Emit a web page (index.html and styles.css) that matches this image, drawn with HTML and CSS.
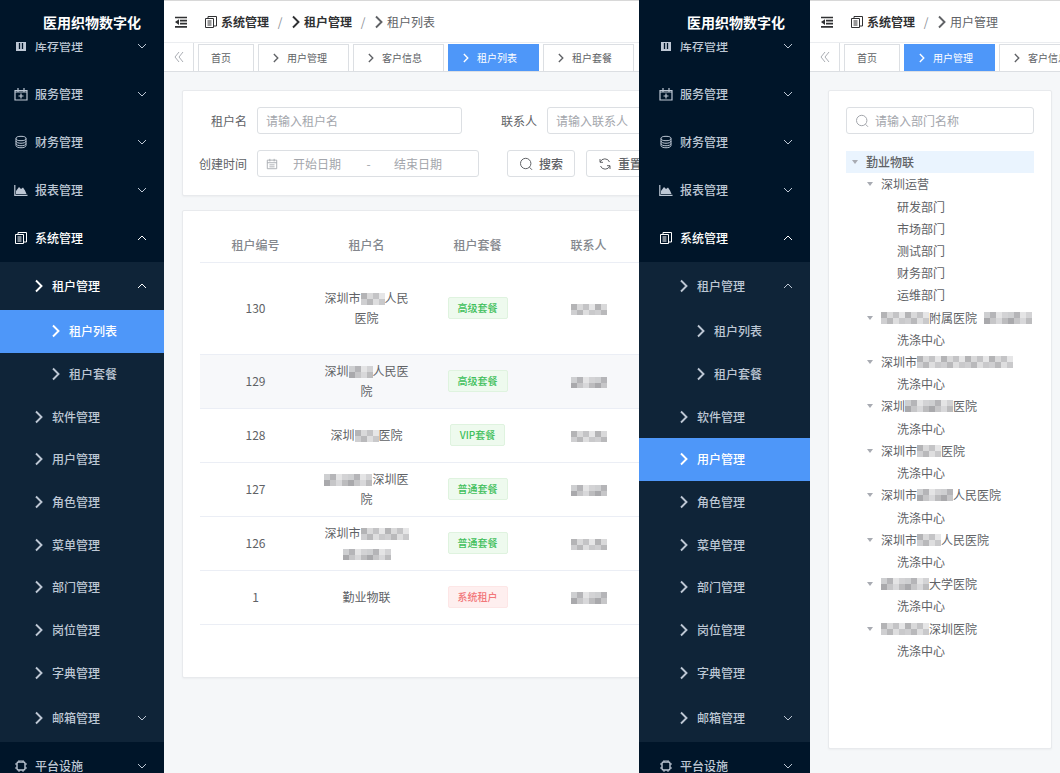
FILE: index.html
```html
<!DOCTYPE html>
<html lang="zh-CN">
<head>
<meta charset="utf-8">
<meta name="viewport" content="width=device-width, initial-scale=1">
<title>医用织物数字化</title>
<link rel="stylesheet" href="styles.css">
</head>
<body>
<svg class="sprite" aria-hidden="true">
  <symbol id="i-right" viewBox="0 0 10 14"><path d="M2 1.5 7.5 7 2 12.5" fill="none" stroke="currentColor" stroke-width="1.9"/></symbol>
  <symbol id="i-down" viewBox="0 0 10 10"><path d="M1 3 5 7 9 3" fill="none" stroke="currentColor" stroke-width="1"/></symbol>
  <symbol id="i-up" viewBox="0 0 10 10"><path d="M1 7 5 3 9 7" fill="none" stroke="currentColor" stroke-width="1"/></symbol>
  <symbol id="i-stock" viewBox="0 0 14 14"><path d="M2 2.5h10v9.500H2z" fill="currentColor"/><path d="M5.500 4v6M8.500 4v6" stroke="#001529" stroke-width="1.300"/></symbol>
  <symbol id="i-service" viewBox="0 0 14 14"><path d="M1 3.500h12v9.500H1zM1.500 5h11M4 1v4M10 1v4M7 6.500v5M4.500 9h5" fill="none" stroke="currentColor" stroke-width="1.200"/></symbol>
  <symbol id="i-finance" viewBox="0 0 14 14"><g fill="none" stroke="currentColor"><ellipse cx="7" cy="3.500" rx="5" ry="2.200"/><path d="M2 3.500v7c0 3 10 3 10 0v-7M2 6c0 3 10 3 10 0M2 8.500c0 3 10 3 10 0"/></g></symbol>
  <symbol id="i-chart" viewBox="0 0 14 14"><path d="M.8 2v10.300H13.500" fill="none" stroke="currentColor" stroke-width="1.200"/><path d="M2 11V8l3-4 2 2 2-1.500 2 3 1.500 3.500z" fill="currentColor"/></symbol>
  <symbol id="i-system" viewBox="0 0 14 14"><path d="M1.500 3.500h8v9h-8zM4 3.500v-2h8.500v9.500H9.500M3.500 6h4M3.500 8h4M3.500 10h4" fill="none" stroke="currentColor"/></symbol>
  <symbol id="i-chip" viewBox="0 0 14 14"><rect x="3" y="3" width="8" height="8" rx="1.500" fill="none" stroke="currentColor" stroke-width="1.400"/><path d="M5 1v2M7 1v1M9 1v2M5 11v2M9 11v2M1 5h2M1 9h2M11 5h2M11 9h2" stroke="currentColor"/></symbol>
  <symbol id="i-fold" viewBox="0 0 14 14"><path d="M1 2.500h12M6 5.700h7M6 8.600h7M1 11.800h12" fill="none" stroke="currentColor" stroke-width="1.700"/><path d="M5 4.300v5.600L1 7.100z" fill="currentColor"/></symbol>
  <symbol id="i-double" viewBox="0 0 12 12"><path d="M6 1 2 6l4 5M10 1 6 6l4 5" fill="none" stroke="currentColor" stroke-width=".9"/></symbol>
  <symbol id="i-calendar" viewBox="0 0 14 14"><path d="M1.500 2.500h11v10h-11zM1.500 5.500h11M4.500 1v3M9.500 1v3M4 8h6M4 10.300h6" fill="none" stroke="currentColor"/></symbol>
  <symbol id="i-search" viewBox="0 0 14 14"><circle cx="6.700" cy="6.500" r="5.200" fill="none" stroke="currentColor"/><path d="m10.500 10.300 2.500 2.500" stroke="currentColor"/></symbol>
  <symbol id="i-reset" viewBox="0 0 14 14"><path d="M2.200 5A5 5 0 0 1 11.500 5M11.800 9A5 5 0 0 1 2.500 9M2 2v3.300h3M12 12V8.700H9" fill="none" stroke="currentColor"/></symbol>
  <symbol id="i-caret" viewBox="0 0 8 8"><path d="M1 2h6L4 6z" fill="currentColor"/></symbol>
</svg>

<div class="desk">
  <section class="app" aria-label="租户列表">
    <nav class="side">
      <h1 class="brand">医用织物数字化</h1>
      <div class="scroll">
        <ul class="menu">
          <li><a class="item" href="#"><svg class="ico"><use href="#i-stock"/></svg>库存管理<svg class="fold"><use href="#i-down"/></svg></a></li>
          <li><a class="item" href="#"><svg class="ico"><use href="#i-service"/></svg>服务管理<svg class="fold"><use href="#i-down"/></svg></a></li>
          <li><a class="item" href="#"><svg class="ico"><use href="#i-finance"/></svg>财务管理<svg class="fold"><use href="#i-down"/></svg></a></li>
          <li><a class="item" href="#"><svg class="ico"><use href="#i-chart"/></svg>报表管理<svg class="fold"><use href="#i-down"/></svg></a></li>
          <li><a class="item open" href="#"><svg class="ico"><use href="#i-system"/></svg>系统管理<svg class="fold"><use href="#i-up"/></svg></a>
            <ul class="submenu">
              <li class="group"><a class="item sub open" href="#"><svg class="arr"><use href="#i-right"/></svg>租户管理<svg class="fold"><use href="#i-up"/></svg></a></li>
              <li><a class="item leaf active" href="#"><svg class="arr"><use href="#i-right"/></svg>租户列表</a></li>
              <li><a class="item leaf" href="#"><svg class="arr"><use href="#i-right"/></svg>租户套餐</a></li>
              <li><a class="item sub" href="#"><svg class="arr"><use href="#i-right"/></svg>软件管理</a></li>
              <li><a class="item sub" href="#"><svg class="arr"><use href="#i-right"/></svg>用户管理</a></li>
              <li><a class="item sub" href="#"><svg class="arr"><use href="#i-right"/></svg>角色管理</a></li>
              <li><a class="item sub" href="#"><svg class="arr"><use href="#i-right"/></svg>菜单管理</a></li>
              <li><a class="item sub" href="#"><svg class="arr"><use href="#i-right"/></svg>部门管理</a></li>
              <li><a class="item sub" href="#"><svg class="arr"><use href="#i-right"/></svg>岗位管理</a></li>
              <li><a class="item sub" href="#"><svg class="arr"><use href="#i-right"/></svg>字典管理</a></li>
              <li class="group"><a class="item sub" href="#"><svg class="arr"><use href="#i-right"/></svg>邮箱管理<svg class="fold"><use href="#i-down"/></svg></a></li>
            </ul>
          </li>
          <li><a class="item" href="#"><svg class="ico"><use href="#i-chip"/></svg>平台设施<svg class="fold"><use href="#i-down"/></svg></a></li>
        </ul>
      </div>
    </nav>
    <main class="main">
      <header class="top">
        <button class="toggle" aria-label="折叠菜单"><svg class="ico"><use href="#i-fold"/></svg></button>
        <nav class="crumbs" aria-label="面包屑">
          <a href="#"><svg class="ico"><use href="#i-system"/></svg>系统管理</a><span class="sep">/</span>
          <a href="#"><svg class="arr"><use href="#i-right"/></svg>租户管理</a><span class="sep">/</span>
          <span class="here"><svg class="arr"><use href="#i-right"/></svg>租户列表</span>
        </nav>
      </header>
      <nav class="tabs" aria-label="标签页">
        <button class="prev" aria-label="向左"><svg><use href="#i-double"/></svg></button>
        <a class="tab home" href="#">首页</a>
        <a class="tab" href="#"><svg class="arr"><use href="#i-right"/></svg>用户管理</a>
        <a class="tab" href="#"><svg class="arr"><use href="#i-right"/></svg>客户信息</a>
        <a class="tab active" href="#"><svg class="arr"><use href="#i-right"/></svg>租户列表</a>
        <a class="tab" href="#"><svg class="arr"><use href="#i-right"/></svg>租户套餐</a>
      </nav>
      <div class="content">
        <form class="card filter">
          <div class="line">
            <label for="name">租户名</label>
            <input class="field" id="name" type="text" placeholder="请输入租户名">
            <label class="second" for="contact">联系人</label>
            <input class="field" id="contact" type="text" placeholder="请输入联系人">
          </div>
          <div class="line">
            <label for="from">创建时间</label>
            <div class="field range">
              <svg class="ico"><use href="#i-calendar"/></svg>
              <input id="from" type="text" placeholder="开始日期">
              <span>-</span>
              <input type="text" placeholder="结束日期" aria-label="结束日期">
            </div>
            <button class="btn first" type="button"><svg class="ico"><use href="#i-search"/></svg>搜索</button>
            <button class="btn" type="button"><svg class="ico"><use href="#i-reset"/></svg>重置</button>
          </div>
        </form>
        <div class="card list">
          <table>
            <thead><tr><th>租户编号</th><th>租户名</th><th>租户套餐</th><th>联系人</th></tr></thead>
            <tbody>
              <tr class="tall"><td>130</td><td>深圳市<i class="mask w2"></i>人民医院</td><td><span class="tag">高级套餐</span></td><td><i class="mask w3 low"></i></td></tr>
              <tr class="hover"><td>129</td><td>深圳<i class="mask w2 alt"></i>人民医院</td><td><span class="tag">高级套餐</span></td><td><i class="mask w3 low alt"></i></td></tr>
              <tr><td>128</td><td>深圳<i class="mask w2"></i>医院</td><td><span class="tag">VIP套餐</span></td><td><i class="mask w3 low"></i></td></tr>
              <tr><td>127</td><td><i class="mask w4 alt"></i>深圳医院</td><td><span class="tag">普通套餐</span></td><td><i class="mask w3 low alt"></i></td></tr>
              <tr><td>126</td><td>深圳市<i class="mask w4"></i><i class="mask w4 low alt"></i></td><td><span class="tag">普通套餐</span></td><td><i class="mask w3 low"></i></td></tr>
              <tr><td>1</td><td>勤业物联</td><td><span class="tag red">系统租户</span></td><td><i class="mask w3 alt"></i></td></tr>
            </tbody>
          </table>
        </div>
      </div>
    </main>
  </section>

  <section class="app wide" aria-label="用户管理">
    <nav class="side">
      <h1 class="brand">医用织物数字化</h1>
      <div class="scroll">
        <ul class="menu">
          <li><a class="item" href="#"><svg class="ico"><use href="#i-stock"/></svg>库存管理<svg class="fold"><use href="#i-down"/></svg></a></li>
          <li><a class="item" href="#"><svg class="ico"><use href="#i-service"/></svg>服务管理<svg class="fold"><use href="#i-down"/></svg></a></li>
          <li><a class="item" href="#"><svg class="ico"><use href="#i-finance"/></svg>财务管理<svg class="fold"><use href="#i-down"/></svg></a></li>
          <li><a class="item" href="#"><svg class="ico"><use href="#i-chart"/></svg>报表管理<svg class="fold"><use href="#i-down"/></svg></a></li>
          <li><a class="item open" href="#"><svg class="ico"><use href="#i-system"/></svg>系统管理<svg class="fold"><use href="#i-up"/></svg></a>
            <ul class="submenu">
              <li class="group"><a class="item sub" href="#"><svg class="arr"><use href="#i-right"/></svg>租户管理<svg class="fold"><use href="#i-up"/></svg></a></li>
              <li><a class="item leaf" href="#"><svg class="arr"><use href="#i-right"/></svg>租户列表</a></li>
              <li><a class="item leaf" href="#"><svg class="arr"><use href="#i-right"/></svg>租户套餐</a></li>
              <li><a class="item sub" href="#"><svg class="arr"><use href="#i-right"/></svg>软件管理</a></li>
              <li><a class="item sub active" href="#"><svg class="arr"><use href="#i-right"/></svg>用户管理</a></li>
              <li><a class="item sub" href="#"><svg class="arr"><use href="#i-right"/></svg>角色管理</a></li>
              <li><a class="item sub" href="#"><svg class="arr"><use href="#i-right"/></svg>菜单管理</a></li>
              <li><a class="item sub" href="#"><svg class="arr"><use href="#i-right"/></svg>部门管理</a></li>
              <li><a class="item sub" href="#"><svg class="arr"><use href="#i-right"/></svg>岗位管理</a></li>
              <li><a class="item sub" href="#"><svg class="arr"><use href="#i-right"/></svg>字典管理</a></li>
              <li class="group"><a class="item sub" href="#"><svg class="arr"><use href="#i-right"/></svg>邮箱管理<svg class="fold"><use href="#i-down"/></svg></a></li>
            </ul>
          </li>
          <li><a class="item" href="#"><svg class="ico"><use href="#i-chip"/></svg>平台设施<svg class="fold"><use href="#i-down"/></svg></a></li>
        </ul>
      </div>
    </nav>
    <main class="main">
      <header class="top">
        <button class="toggle" aria-label="折叠菜单"><svg class="ico"><use href="#i-fold"/></svg></button>
        <nav class="crumbs" aria-label="面包屑">
          <a href="#"><svg class="ico"><use href="#i-system"/></svg>系统管理</a><span class="sep">/</span>
          <span class="here"><svg class="arr"><use href="#i-right"/></svg>用户管理</span>
        </nav>
      </header>
      <nav class="tabs" aria-label="标签页">
        <button class="prev" aria-label="向左"><svg><use href="#i-double"/></svg></button>
        <a class="tab home" href="#">首页</a>
        <a class="tab active" href="#"><svg class="arr"><use href="#i-right"/></svg>用户管理</a>
        <a class="tab" href="#"><svg class="arr"><use href="#i-right"/></svg>客户信息</a>
      </nav>
      <div class="content">
        <div class="card depts">
          <div class="field search">
            <svg class="ico"><use href="#i-search"/></svg>
            <input type="text" placeholder="请输入部门名称" aria-label="部门名称">
          </div>
          <ul class="tree" role="tree">
            <li class="l1 current" role="treeitem"><svg><use href="#i-caret"/></svg>勤业物联</li>
            <li class="l2" role="treeitem"><svg><use href="#i-caret"/></svg>深圳运营</li>
            <li class="l3" role="treeitem">研发部门</li>
            <li class="l3" role="treeitem">市场部门</li>
            <li class="l3" role="treeitem">测试部门</li>
            <li class="l3" role="treeitem">财务部门</li>
            <li class="l3" role="treeitem">运维部门</li>
            <li class="l2" role="treeitem"><svg><use href="#i-caret"/></svg><i class="mask w4"></i>附属医院<i class="mask w4 apart alt"></i></li>
            <li class="l3" role="treeitem">洗涤中心</li>
            <li class="l2" role="treeitem"><svg><use href="#i-caret"/></svg>深圳市<i class="mask w8"></i></li>
            <li class="l3" role="treeitem">洗涤中心</li>
            <li class="l2" role="treeitem"><svg><use href="#i-caret"/></svg>深圳<i class="mask w4 alt"></i>医院</li>
            <li class="l3" role="treeitem">洗涤中心</li>
            <li class="l2" role="treeitem"><svg><use href="#i-caret"/></svg>深圳市<i class="mask w2"></i>医院</li>
            <li class="l3" role="treeitem">洗涤中心</li>
            <li class="l2" role="treeitem"><svg><use href="#i-caret"/></svg>深圳市<i class="mask w3 alt"></i>人民医院</li>
            <li class="l3" role="treeitem">洗涤中心</li>
            <li class="l2" role="treeitem"><svg><use href="#i-caret"/></svg>深圳市<i class="mask w2"></i>人民医院</li>
            <li class="l3" role="treeitem">洗涤中心</li>
            <li class="l2" role="treeitem"><svg><use href="#i-caret"/></svg><i class="mask w4 alt"></i>大学医院</li>
            <li class="l3" role="treeitem">洗涤中心</li>
            <li class="l2" role="treeitem"><svg><use href="#i-caret"/></svg><i class="mask w4"></i>深圳医院</li>
            <li class="l3" role="treeitem">洗涤中心</li>
          </ul>
        </div>
      </div>
    </main>
  </section>
</div>
</body>
</html>
```

FILE: styles.css
```css
* { box-sizing: border-box; }

body {
  margin: 0;
  font: 12px/20px "Noto Sans CJK SC", "Noto Sans", sans-serif;
  color: #606266;
  background: #f5f7f9;
}

ul { list-style: none; margin: 0; padding: 0; }
a { color: inherit; text-decoration: none; }
button, input { font: inherit; color: inherit; margin: 0; }
button { cursor: pointer; }
svg { flex: none; }

.sprite { position: absolute; width: 0; height: 0; }
.ico { width: 14px; height: 14px; }
.arr { width: 10px; height: 14px; }

.desk {
  display: grid;
  grid-template-columns: 639fr 421fr;
  height: 100vh;
  overflow: hidden;
}

.app { display: flex; min-width: 0; overflow: hidden; }

/* Sidebar */
.side {
  flex: none;
  display: flex;
  flex-direction: column;
  width: 164px;
  background: #001529;
  color: #bdc7d4;
}
.wide .side { width: 171px; }
.brand {
  flex: none;
  height: 42px;
  margin: 0;
  padding-left: 43px;
  font-size: 14px;
  font-weight: 700;
  line-height: 44px;
  color: #fff;
  white-space: nowrap;
}
.wide .brand { padding-left: 48px; }
.scroll { flex: 1; min-height: 0; overflow: hidden; }
.menu { margin-top: -20px; }
.item {
  display: flex;
  align-items: center;
  gap: 7px;
  height: 48px;
  padding: 0 17px 0 14px;
  font-weight: 500;
}
.wide .item { padding-left: 20px; }
.fold { width: 10px; height: 10px; margin-left: auto; }
.submenu {
  display: flex;
  flex-direction: column;
  height: 480px;
  background: #0f2438;
}
.submenu li { flex: 1; }
.submenu .group { flex: none; }
.submenu .item { height: 100%; }
.submenu .group .item { height: 48px; }
.item.sub { padding-left: 34px; gap: 8px; }
.item.leaf { padding-left: 51px; gap: 8px; }
.wide .item.sub { padding-left: 40px; }
.wide .item.leaf { padding-left: 57px; }
.item.open { color: #fff; }
.item.active { background: #4e97f9; color: #fff; }

/* Header and tabs */
.main {
  flex: 1;
  display: flex;
  flex-direction: column;
  min-width: 0;
  overflow: hidden;
}
.top {
  flex: none;
  display: flex;
  align-items: center;
  height: 43px;
  padding-left: 10px;
  border-top: 1px solid #d8d8d8;
  border-bottom: 1px solid #ebedf0;
  background: #fff;
  color: #303133;
}
.toggle { display: flex; padding: 0; border: 0; background: none; }
.crumbs { display: flex; align-items: center; margin-left: 16px; white-space: nowrap; }
.crumbs a, .here { display: flex; align-items: center; gap: 3px; }
.crumbs a { font-weight: 700; }
.here { color: #606266; }
.sep { width: 22px; text-align: center; color: #8b8f96; }
.tabs {
  flex: none;
  display: flex;
  gap: 4px;
  height: 29px;
  border-bottom: 1px solid #dcdfe3;
  background: #fff;
  font-size: 10px;
}
.prev {
  flex: none;
  display: grid;
  place-items: center;
  width: 30px;
  padding: 0;
  border: 0;
  border-right: 1px solid #dcdfe3;
  background: none;
  color: #a0a4aa;
}
.prev svg { width: 12px; height: 12px; }
.tab {
  flex: none;
  display: flex;
  align-items: center;
  gap: 6px;
  width: 91px;
  height: 27px;
  margin-top: 1px;
  padding-left: 12px;
  border: 1px solid #dcdfe3;
  border-bottom: 0;
  background: #fff;
}
.tab.home { width: 56px; }
.tab .arr { height: 10px; }
.tab.active { border-color: #4e97f9; background: #4e97f9; color: #fff; }

/* Cards */
.content {
  flex: 1;
  display: flex;
  flex-direction: column;
  gap: 14px;
  padding: 18px 8px 24px 18px;
}
.card {
  border: 1px solid #e8eaed;
  border-radius: 2px;
  background: #fff;
  box-shadow: 0 1px 2px rgba(0, 0, 0, .04);
}
.field {
  width: 205px;
  height: 27px;
  padding: 0 8px;
  border: 1px solid #dcdfe3;
  border-radius: 3px;
  background: #fff;
}
input { outline: 0; }
input::placeholder { color: #a3a6ac; opacity: 1; }
.filter, .list { width: 520px; }
.filter { display: grid; gap: 16px; padding: 16px 0 18px; }
.line { display: flex; align-items: center; }
.line label { width: 64px; margin-right: 10px; text-align: right; }
.line .second { width: 75px; }
.range { display: flex; align-items: center; width: 222px; color: #a3a6ac; }
.range input { width: 50px; padding: 0; border: 0; background: none; }
.range .ico { width: 12px; height: 12px; margin-right: 15px; }
.range span { width: 51px; text-align: center; }
.btn {
  display: flex;
  align-items: center;
  gap: 6px;
  height: 27px;
  padding: 0 11px;
  border: 1px solid #dcdfe3;
  border-radius: 3px;
  background: #fff;
  font-weight: 500;
}
.btn.first { margin: 0 11px 0 28px; }

/* Tenant table */
.list { padding: 17px 17px 52px; }
table { width: 100%; border-collapse: collapse; table-layout: fixed; }
th, td { width: 111px; padding: 0 12px; text-align: center; border-bottom: 1px solid #ebeef5; }
table { width: 444px; }
th { height: 34px; font-weight: 500; color: #84878d; }
td { height: 54px; }
.tall td { height: 92px; }
.hover td { background: #f7f8fa; }
.tag {
  display: inline-block;
  padding: 0 9px;
  border: 1px solid #dff3df;
  border-radius: 2px;
  background: #eefaee;
  color: #3fbf5b;
  font-size: 10px;
  font-weight: 500;
}
.tag.red { border-color: #fde6e6; background: #feefef; color: #f2777a; }

/* Pixelated cover over private names */
.mask {
  display: inline-block;
  height: 12px;
  vertical-align: -2px;
  background:
    repeating-linear-gradient(90deg, #b4b4b6 0 6px, #d9d9da 6px 12px, #c4c4c6 12px 18px, #e6e6e7 18px 24px) top / 100% 6px no-repeat,
    repeating-linear-gradient(90deg, #cfcfd1 0 6px, #b9b9bb 6px 12px, #dededf 12px 18px, #c9c9cb 18px 24px) bottom / 100% 6px no-repeat;
}
.mask.alt {
  background:
    repeating-linear-gradient(90deg, #cecfd1 0 6px, #b5b5b8 6px 12px, #e4e4e5 12px 18px, #d3d3d5 18px 24px) top / 100% 6px no-repeat,
    repeating-linear-gradient(90deg, #a9a9ac 0 6px, #c6c6c8 6px 12px, #d8d8da 12px 18px, #bcbcbe 18px 24px) bottom / 100% 6px no-repeat;
}
.w2 { width: 24px; }
.w3 { width: 36px; }
.w4 { width: 48px; }
.w8 { width: 96px; }
.low { height: 11px; }
.apart { margin-left: 7px; }

/* Department tree */
.depts { flex: 1; padding: 16px 17px; }
.search { display: flex; align-items: center; gap: 6px; width: 100%; color: #a3a6ac; }
.search input { flex: 1; min-width: 0; padding: 0; border: 0; background: none; }
.tree {
  display: grid;
  grid-auto-rows: 1fr;
  height: 511px;
  margin-top: 17px;
}
.tree li { display: flex; align-items: center; white-space: nowrap; }
.tree svg { width: 8px; height: 8px; margin-right: 7px; color: #a8abb2; }
.l1 { padding-left: 5px; }
.l2 { padding-left: 20px; }
.l3 { padding-left: 51px; }
.tree .current { background: #eaf4fe; font-weight: 500; }
```
